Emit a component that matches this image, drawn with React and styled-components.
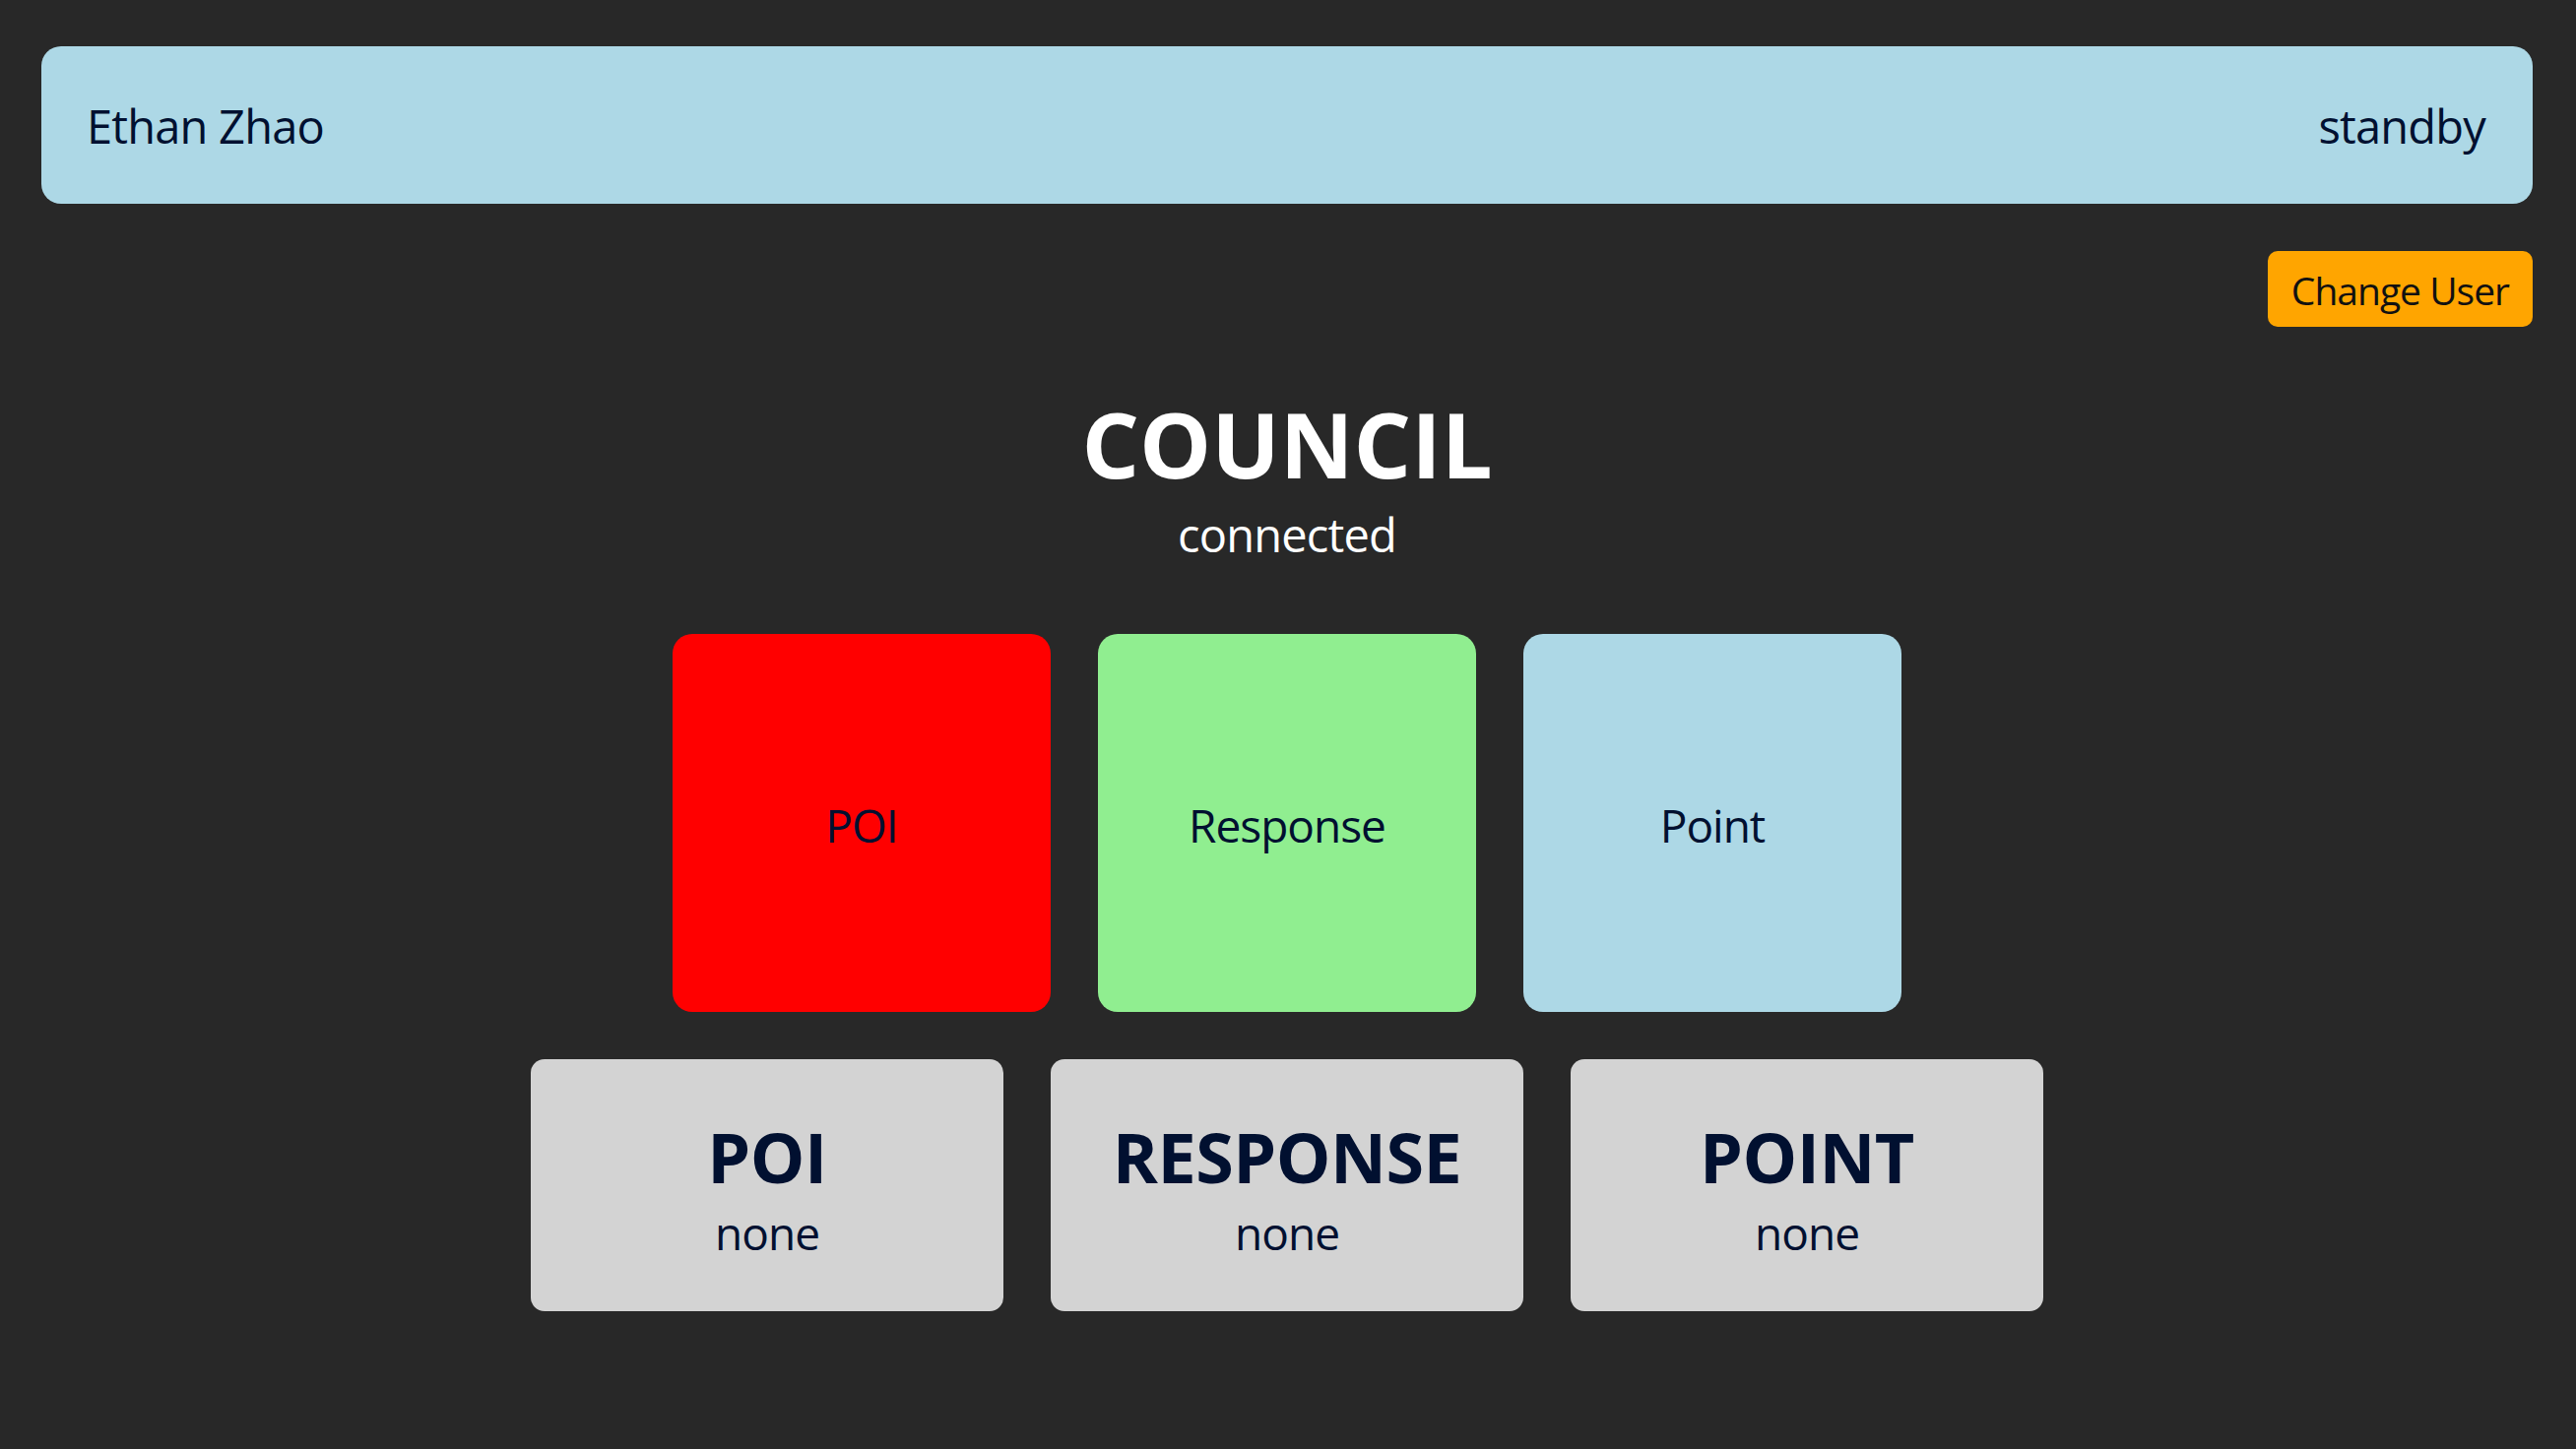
import React from 'react';
import styled, { createGlobalStyle } from 'styled-components';

const GlobalStyle = createGlobalStyle`
  html, body {
    margin: 0;
    padding: 0;
    background: #282828;
  }
  body {
    font-family: "Open Sans", "Noto Sans", sans-serif;
    color: #011030;
  }
`;

const Page = styled.div`
  min-height: 1472px;
  box-sizing: border-box;
  padding: 47px 44px 0 42px;
  display: flex;
  flex-direction: column;
`;

const Header = styled.header`
  height: 160px;
  box-sizing: border-box;
  border-radius: 20px;
  background: #add8e6;
  padding: 2px 48px 0 46px;
  display: flex;
  align-items: center;
  justify-content: space-between;
  font-size: 47px;
  letter-spacing: -0.8px;
`;

const Toolbar = styled.div`
  display: flex;
  justify-content: flex-end;
  margin-top: 48px;
`;

const ChangeButton = styled.button`
  height: 77px;
  padding: 2px 24px 0;
  border: none;
  border-radius: 10px;
  background: #ffa500;
  color: #111;
  font-family: inherit;
  font-size: 39px;
  letter-spacing: -1px;
  cursor: pointer;
`;

const Title = styled.h1`
  margin: 68px 0 0;
  text-align: center;
  color: #fff;
  font-size: 92px;
  font-weight: 700;
  line-height: 1.1;
  letter-spacing: 0;
`;

const Status = styled.div`
  margin-top: 14px;
  text-align: center;
  color: #fff;
  font-size: 47px;
  letter-spacing: -0.8px;
  line-height: 1.2;
`;

const PadRow = styled.div`
  display: flex;
  justify-content: center;
  gap: 48px;
  margin-top: 72px;
`;

const Pad = styled.button`
  width: 384px;
  height: 384px;
  padding: 4px 0 0;
  border: none;
  border-radius: 20px;
  background: ${(p) => p.$color};
  color: #011030;
  font-family: inherit;
  font-size: 46px;
  letter-spacing: -1px;
  cursor: pointer;
`;

const CardRow = styled.div`
  display: flex;
  justify-content: center;
  gap: 48px;
  margin-top: 48px;
`;

const Card = styled.div`
  width: 480px;
  height: 256px;
  box-sizing: border-box;
  padding-top: 10px;
  border-radius: 14px;
  background: #d3d3d3;
  display: flex;
  flex-direction: column;
  align-items: center;
  justify-content: center;
`;

const CardTitle = styled.div`
  font-size: 70px;
  font-weight: 700;
  line-height: 1.1;
  letter-spacing: -0.5px;
`;

const CardValue = styled.div`
  margin-top: 11px;
  font-size: 46px;
  line-height: 1.2;
  letter-spacing: -1px;
`;

const pads = [
  { label: 'POI', color: '#ff0000' },
  { label: 'Response', color: '#90ee90' },
  { label: 'Point', color: '#add8e6' },
];

const cards = [
  { title: 'POI', value: 'none' },
  { title: 'RESPONSE', value: 'none' },
  { title: 'POINT', value: 'none' },
];

export default function App() {
  return (
    <>
      <GlobalStyle />
      <Page>
        <Header>
          <span>Ethan Zhao</span>
          <span>standby</span>
        </Header>
        <Toolbar>
          <ChangeButton>Change User</ChangeButton>
        </Toolbar>
        <Title>COUNCIL</Title>
        <Status>connected</Status>
        <PadRow>
          {pads.map((p) => (
            <Pad key={p.label} $color={p.color}>
              {p.label}
            </Pad>
          ))}
        </PadRow>
        <CardRow>
          {cards.map((c) => (
            <Card key={c.title}>
              <CardTitle>{c.title}</CardTitle>
              <CardValue>{c.value}</CardValue>
            </Card>
          ))}
        </CardRow>
      </Page>
    </>
  );
}
